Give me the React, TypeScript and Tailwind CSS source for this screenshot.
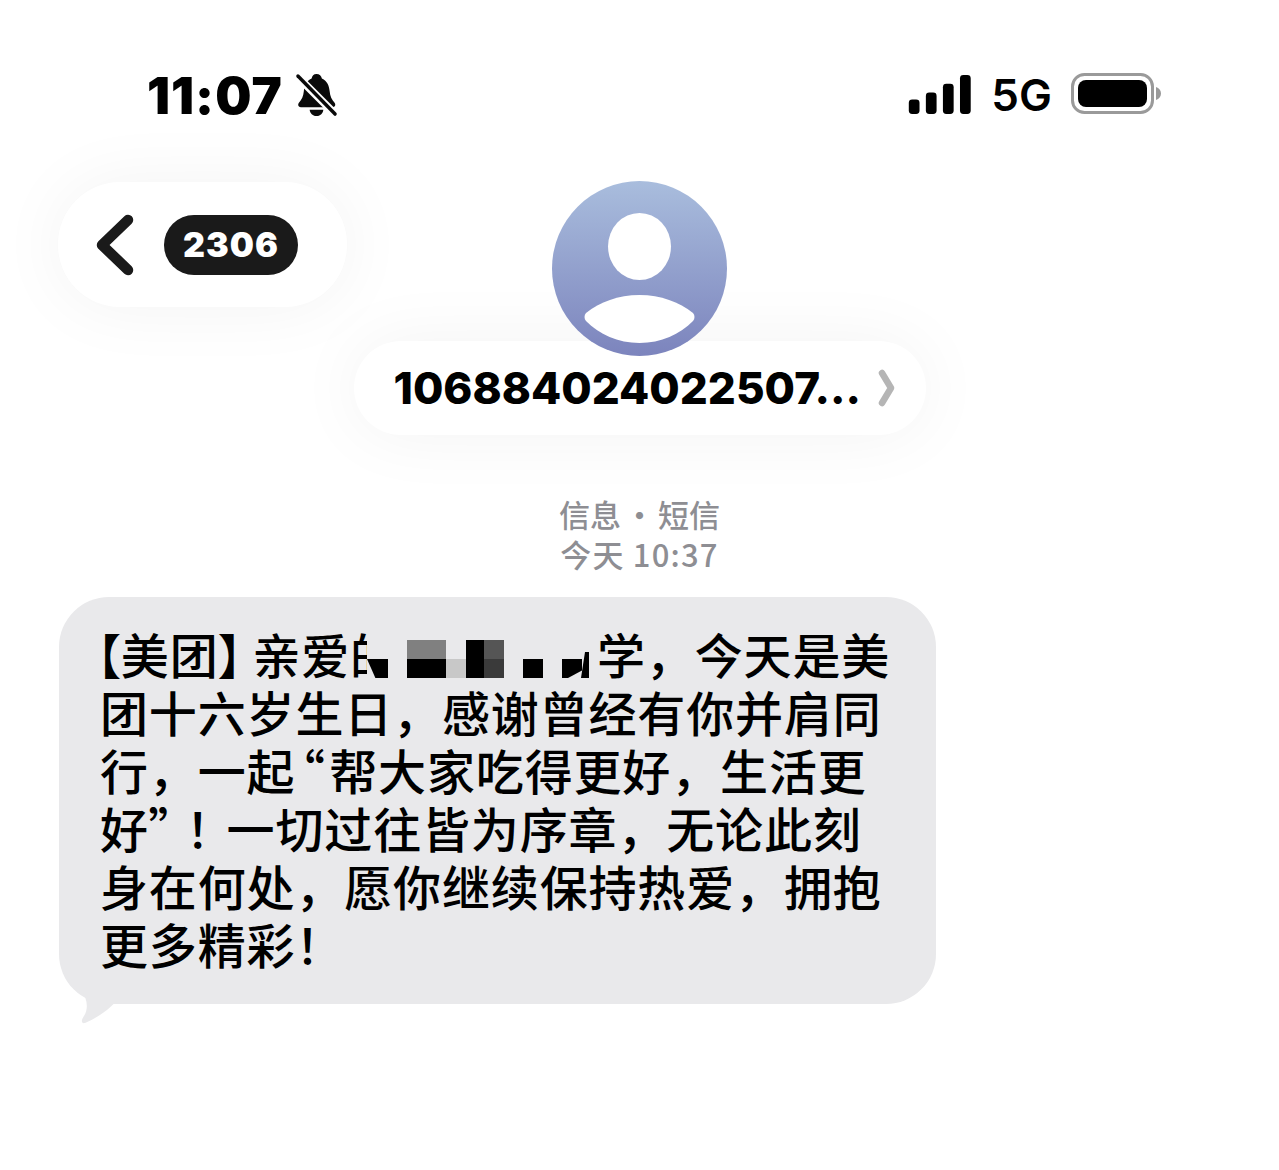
import React from 'react';

const cjk = { fontFamily: '"Noto Sans CJK SC", sans-serif' };

function BellOff() {
  return (
    <svg width="43" height="45" viewBox="0 0 44 46" className="ml-[12px]">
      <path d="M22 1c3 0 5 2 5.500 4.500C33 8 35 13 35.500 19c.4 5 2 8 5 11.500 1.500 2 .5 4.500-2 4.500H6c-2.500 0-3.500-2.500-2-4.500C7 27 8.500 24 9 19c.5-6 2.500-11 8-13.500C17.500 3 19 1 22 1z" fill="#0a0a0a" />
      <path d="M15 37.500h14c-.5 4-3.500 6.500-7 6.500s-6.500-2.500-7-6.500z" fill="#0a0a0a" />
      <path d="M2 3L42 43" stroke="#fff" strokeWidth="8" />
      <path d="M3 3L41 42" stroke="#0a0a0a" strokeWidth="3.500" strokeLinecap="round" />
    </svg>
  );
}

function Signal() {
  return (
    <svg width="64" height="39" viewBox="0 0 64 40" className="-mt-[2px]">
      <rect x="0" y="25" width="11" height="15" rx="3.500" fill="#000" />
      <rect x="17.500" y="18" width="11" height="22" rx="3.500" fill="#000" />
      <rect x="35" y="9" width="11" height="31" rx="3.500" fill="#000" />
      <rect x="52.500" y="0" width="11" height="40" rx="3.500" fill="#000" />
    </svg>
  );
}

function Battery() {
  return (
    <svg width="90" height="42" viewBox="0 0 90 42" className="-mt-[2px]">
      <rect x="1.500" y="1.500" width="80" height="38" rx="12" fill="none" stroke="#9a9a9a" strokeWidth="3" />
      <rect x="7" y="7" width="69" height="27" rx="8" fill="#000" />
      <path d="M85 14c3 1 5 3.500 5 6.500S88 26 85 27z" fill="#9a9a9a" />
    </svg>
  );
}

// mosaic over the blurred-out name, drawn over the first line
function Redaction() {
  return (
    <div className="absolute left-[267px] top-0 h-[58px] w-[230px]">
      <div className="absolute left-0 top-[5px] h-[52px] w-[39px] bg-[#e9e9eb]" />
      <div className="absolute left-0 top-[35px] h-[19px] w-[21px] bg-black [clip-path:polygon(0_0,100%_0,100%_100%,40%_100%)]" />
      <div className="absolute left-[40px] top-[16px] h-[19px] w-[39px] bg-[#808080]" />
      <div className="absolute left-[40px] top-[35px] h-[19px] w-[39px] bg-black" />
      <div className="absolute left-[79px] top-[35px] h-[19px] w-[20px] bg-[#c8c8c8]" />
      <div className="absolute left-[99px] top-[16px] h-[38px] w-[18px] bg-black" />
      <div className="absolute left-[117px] top-[16px] h-[19px] w-[20px] bg-[#555555]" />
      <div className="absolute left-[117px] top-[35px] h-[19px] w-[20px] bg-[#3a3a3a]" />
      <div className="absolute left-[156px] top-[35px] h-[19px] w-[20px] bg-black" />
      <div className="absolute left-[195px] top-[35px] h-[19px] w-[20px] bg-black [clip-path:polygon(0_0,100%_0,100%_60%,30%_100%,0_100%)]" />
      <div className="absolute left-[214px] top-[28px] h-[26px] w-[8px] bg-black [clip-path:polygon(50%_0,100%_0,100%_100%,0_100%)]" />
    </div>
  );
}

export default function App() {
  return (
    <div className="h-[1170px] w-[1279px] overflow-hidden bg-white text-black" style={cjk}>
      <div className="flex h-[182px] items-start justify-between pl-[147px] pr-[118px] pt-[64px]">
        <div className="flex h-[62px] items-center">
          <span className="font-['Inter'] text-[51px] font-black leading-none tracking-[1px]">11:07</span>
          <BellOff />
        </div>
        <div className="flex h-[62px] items-center">
          <Signal />
          <span className="ml-[19px] mr-[19px] font-['Inter'] text-[44px] font-semibold leading-none">5G</span>
          <Battery />
        </div>
      </div>

      <div className="-mt-[1px] grid grid-cols-[1fr_auto_1fr]">
        <div className="pl-[58px] pt-[1px]">
          <div className="flex h-[125px] w-[289px] items-center rounded-[62px] bg-white pl-[38px] shadow-[0_0_70px_rgba(0,0,0,0.05)]">
            <svg width="38" height="62" viewBox="0 0 38 62">
              <path d="M32 6L6 31l26 25" fill="none" stroke="#1a1a1a" strokeWidth="10.500" strokeLinecap="round" strokeLinejoin="round" />
            </svg>
            <span className="ml-[30px] flex h-[60px] w-[134px] items-center justify-center rounded-[30px] bg-[#1a1a1a] font-['Inter'] text-[34px] font-black leading-none tracking-[1px] text-white">
              2306
            </span>
          </div>
        </div>

        <div className="flex flex-col items-center">
          <svg width="175" height="175" viewBox="0 0 175 175" className="relative z-10">
            <defs>
              <linearGradient id="avatar" x1="0" y1="0" x2="0" y2="1">
                <stop offset="0" stopColor="#a9bddd" />
                <stop offset="1" stopColor="#7c84bd" />
              </linearGradient>
            </defs>
            <circle cx="87.500" cy="87.500" r="87.500" fill="url(#avatar)" />
            <ellipse cx="87.500" cy="65.500" rx="31.500" ry="33.500" fill="#fff" />
            <path d="M34 132C48 121 66 114 87.500 114C109 114 127 121 141 132C143 134 143 138 141 140C128 153 109 162 87.500 162C66 162 47 153 34 140C32 138 32 134 34 132z" fill="#fff" />
          </svg>
          <div className="-mt-[15px] flex h-[94px] w-[572px] items-center rounded-[47px] bg-white pl-[40px] shadow-[0_0_70px_rgba(0,0,0,0.05)]">
            <span className="font-['Inter'] text-[44px] font-extrabold leading-none">106884024022507...</span>
            <svg width="18" height="38" viewBox="0 0 18 38" className="ml-[17px]">
              <path d="M4 4l9 15-9 15" fill="none" stroke="#b5b5b5" strokeWidth="6.500" strokeLinecap="round" strokeLinejoin="round" />
            </svg>
          </div>
        </div>
        <div />
      </div>

      <div className="mt-[59px] flex flex-col items-center text-[31px] font-medium leading-[40px] text-[#8e8e93]">
        <span className="[word-spacing:-4px]">信息 • 短信</span>
        <span className="tracking-[1.2px]">今天 10:37</span>
      </div>

      <div className="relative ml-[59px] mt-[23px] h-[407px] w-[877px] rounded-[50px] bg-[#e9e9eb] pl-[41px] pt-[27px] text-[48px] font-medium leading-[58px] tracking-[0.85px]">
        <div className="relative h-[58px] whitespace-nowrap">
          <span className="-ml-[4px] [font-feature-settings:'palt']">【</span>
          美团
          <span className="[font-feature-settings:'palt']">】</span>
          <span className="ml-[9px]">亲爱的</span>
          <span className="inline-block w-[198px]" />
          学，今天是美
          <Redaction />
        </div>
        <div className="h-[58px] whitespace-nowrap">团十六岁生日，感谢曾经有你并肩同</div>
        <div className="h-[58px] whitespace-nowrap">
          行，一起
          <span className="ml-[5px] mr-[4px] [font-feature-settings:'palt']">“</span>
          帮大家吃得更好，生活更
        </div>
        <div className="h-[58px] whitespace-nowrap">
          好<span className="[font-feature-settings:'palt']">”</span>
          <span className="ml-[12px] [font-feature-settings:'palt']">！</span>
          <span className="ml-[16px]">一切过往皆为序章，无论此刻</span>
        </div>
        <div className="h-[58px] whitespace-nowrap">身在何处，愿你继续保持热爱，拥抱</div>
        <div className="h-[58px] whitespace-nowrap">更多精彩！</div>
        <svg width="44" height="34" viewBox="0 0 44 34" className="absolute left-[22px] top-[393px]">
          <path d="M0 0h44C34 15 22 25 4 33 0 34 0 30 3 26 8 18 6 8 0 0z" fill="#e9e9eb" />
        </svg>
      </div>
    </div>
  );
}
